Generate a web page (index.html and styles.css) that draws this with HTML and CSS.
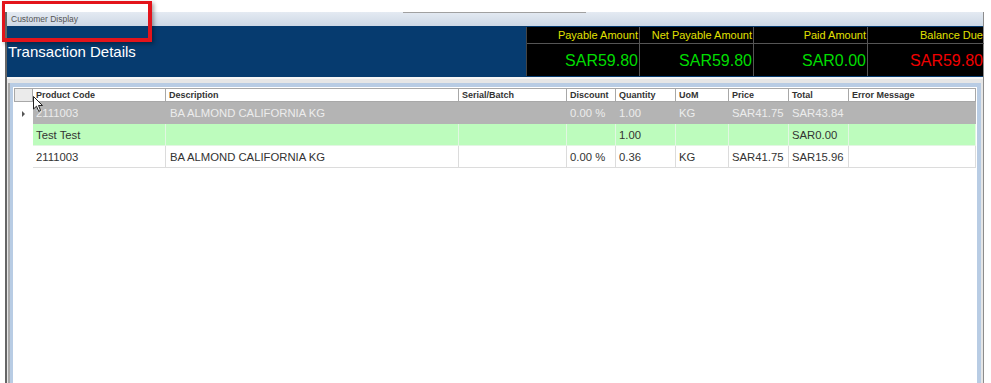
FILE: index.html
```html
<!DOCTYPE html>
<html lang="en">
<head>
    <meta charset="UTF-8">
    <title>Customer Display</title>
    <link rel="stylesheet" href="styles.css">
</head>
<body>

    <!-- Window -->
    <div class="window">
        <div class="titlebar">
            <span class="title-text">Customer Display</span>
            <span class="title-tab"></span>
        </div>

        <!-- Header with totals -->
        <div class="header">
            <div class="header-title">Transaction Details</div>
            <div class="totals">
                <div class="total-label">Payable Amount</div>
                <div class="total-label">Net Payable Amount</div>
                <div class="total-label">Paid Amount</div>
                <div class="total-label">Balance Due</div>
                <div class="total-value">SAR59.80</div>
                <div class="total-value">SAR59.80</div>
                <div class="total-value">SAR0.00</div>
                <div class="total-value due">SAR59.80</div>
            </div>
        </div>

        <!-- Items grid -->
        <div class="content">
            <div class="grid-panel">
                <div class="grid-row grid-head">
                    <div class="cell corner"></div>
                    <div class="cell">Product Code</div>
                    <div class="cell">Description</div>
                    <div class="cell">Serial/Batch</div>
                    <div class="cell">Discount</div>
                    <div class="cell">Quantity</div>
                    <div class="cell">UoM</div>
                    <div class="cell">Price</div>
                    <div class="cell">Total</div>
                    <div class="cell">Error Message</div>
                </div>
                <div class="grid-row selected">
                    <div class="cell selector"><span class="arrow"></span></div>
                    <div class="cell">2111003</div>
                    <div class="cell">BA ALMOND CALIFORNIA KG</div>
                    <div class="cell"></div>
                    <div class="cell">0.00 %</div>
                    <div class="cell">1.00</div>
                    <div class="cell">KG</div>
                    <div class="cell">SAR41.75</div>
                    <div class="cell">SAR43.84</div>
                    <div class="cell"></div>
                </div>
                <div class="grid-row note">
                    <div class="cell selector"></div>
                    <div class="cell">Test Test</div>
                    <div class="cell"></div>
                    <div class="cell"></div>
                    <div class="cell"></div>
                    <div class="cell">1.00</div>
                    <div class="cell"></div>
                    <div class="cell"></div>
                    <div class="cell">SAR0.00</div>
                    <div class="cell"></div>
                </div>
                <div class="grid-row">
                    <div class="cell selector"></div>
                    <div class="cell">2111003</div>
                    <div class="cell">BA ALMOND CALIFORNIA KG</div>
                    <div class="cell"></div>
                    <div class="cell">0.00 %</div>
                    <div class="cell">0.36</div>
                    <div class="cell">KG</div>
                    <div class="cell">SAR41.75</div>
                    <div class="cell">SAR15.96</div>
                    <div class="cell"></div>
                </div>
            </div>
        </div>
    </div>

    <!-- Red highlight over the title -->
    <div class="highlight"></div>

    <!-- Mouse pointer -->
    <svg class="cursor" width="11" height="17" viewBox="0 0 11 17">
        <path d="M0.5 0.5 L0.5 13 L3.5 10.2 L5.7 15.3 L7.6 14.5 L5.5 9.5 L9.5 9.5 Z" fill="#fff" stroke="#222" stroke-width="1"/>
    </svg>

</body>
</html>
```

FILE: styles.css
```css
/* General Body Styling */
html, body {
    margin: 0;
    padding: 0;
    width: 991px;
    height: 383px;
    overflow: hidden;
    background: #fff;
    font-family: 'Liberation Sans', Arial, sans-serif;
}

/* Window frame */
.window {
    margin: 12px 0 0 5px;
    width: 976px;
    height: 371px;
    border-left: 2px solid #666;
    border-right: 1px solid #8c8c8c;
    display: flex;
    flex-direction: column;
}

/* Title bar */
.titlebar {
    position: relative;
    height: 14px;
    flex: none;
    display: flex;
    align-items: center;
    padding-left: 4px;
    background: linear-gradient(#e4eaf2, #cdd8e5);
}
.title-text {
    font-size: 8.5px;
    color: #555;
}
.title-tab {
    position: absolute;
    top: 0;
    left: 396px;
    width: 183px;
    height: 1px;
    background: #a0a0a0;
}

/* Blue header */
.header {
    height: 51px;
    flex: none;
    display: flex;
    justify-content: space-between;
    align-items: flex-start;
    background: #063b6f;
}
.header-title {
    padding: 17px 0 0 1px;
    font-size: 15px;
    color: #fff;
}

/* Totals box */
.totals {
    margin-top: 1px;
    width: 457px;
    display: grid;
    grid-template-columns: 113px 114px 114px 116px;
    grid-template-rows: 17px 32px;
    background: #000;
    box-sizing: border-box;
    border-left: 1px solid #444;
}
.total-label,
.total-value {
    border-right: 1px solid #555;
    text-align: right;
    padding-right: 1px;
    box-sizing: border-box;
}
.total-label {
    border-bottom: 1px solid #555;
    font-size: 11px;
    line-height: 16px;
    color: #e0e000;
}
.total-value {
    font-size: 16px;
    line-height: 32px;
    padding-top: 1px;
    color: #00dc00;
}
.totals > div:nth-child(4n) {
    border-right: none;
}
.total-value.due {
    color: #f00000;
}

/* Grid area */
.content {
    flex: 1;
    background: #e6e6e6;
    border-top: 2px solid #f6f6f6;
    padding: 4px 2px 0 3px;
}
.grid-panel {
    height: 100%;
    background: #fff;
    border: 4px solid #b8cce4;
    border-left-width: 3px;
    border-bottom: none;
    padding-top: 1px;
    box-shadow: -2px 0 0 #a8a8a8;
}
.grid-row {
    display: grid;
    grid-template-columns: 20px 133px 293px 108px 49px 60px 53px 60px 60px 127px;
    height: 22px;
    font-size: 11.3px;
    color: #333;
}
.cell {
    padding-left: 3px;
    line-height: 22px;
    white-space: nowrap;
    overflow: hidden;
    border-right: 1px solid #dcdcdc;
    border-bottom: 1px solid #dcdcdc;
}
.grid-row:not(.grid-head) .cell:nth-child(3) {
    padding-left: 4px;
}
.cell.selector {
    border: none;
    display: flex;
    align-items: center;
    justify-content: center;
    padding: 0;
}
.arrow {
    margin-top: 1px;
    border-left: 3px solid #555;
    border-top: 3px solid transparent;
    border-bottom: 3px solid transparent;
}

/* Column headers */
.grid-head {
    height: 14px;
}
.grid-head .cell {
    font-size: 9px;
    font-weight: bold;
    color: #333;
    line-height: 12px;
    border-top: 1px solid #a8a8a8;
    border-right: 1px solid #a8a8a8;
    border-bottom: 1px solid #a8a8a8;
}
.grid-head .cell.corner {
    background: #ebebeb;
    border-left: 1px solid #a8a8a8;
    margin-left: 1px;
}

/* Row states */
.grid-row.selected .cell:not(.selector) {
    background: #b4b4b4;
    color: #ececec;
    border-color: #b4b4b4;
}
.grid-row.note .cell:not(.selector) {
    background: #bdfcbd;
    border-color: #e2f6e2;
}

/* Red highlight */
.highlight {
    position: absolute;
    left: 2px;
    top: 1px;
    width: 143px;
    height: 34px;
    border: 3px solid #e3141b;
    border-right-width: 4px;
    border-bottom-width: 4px;
    box-shadow: 2px 2px 4px rgba(0, 0, 0, 0.35);
}

/* Mouse pointer */
.cursor {
    position: absolute;
    left: 33px;
    top: 96px;
}
```
